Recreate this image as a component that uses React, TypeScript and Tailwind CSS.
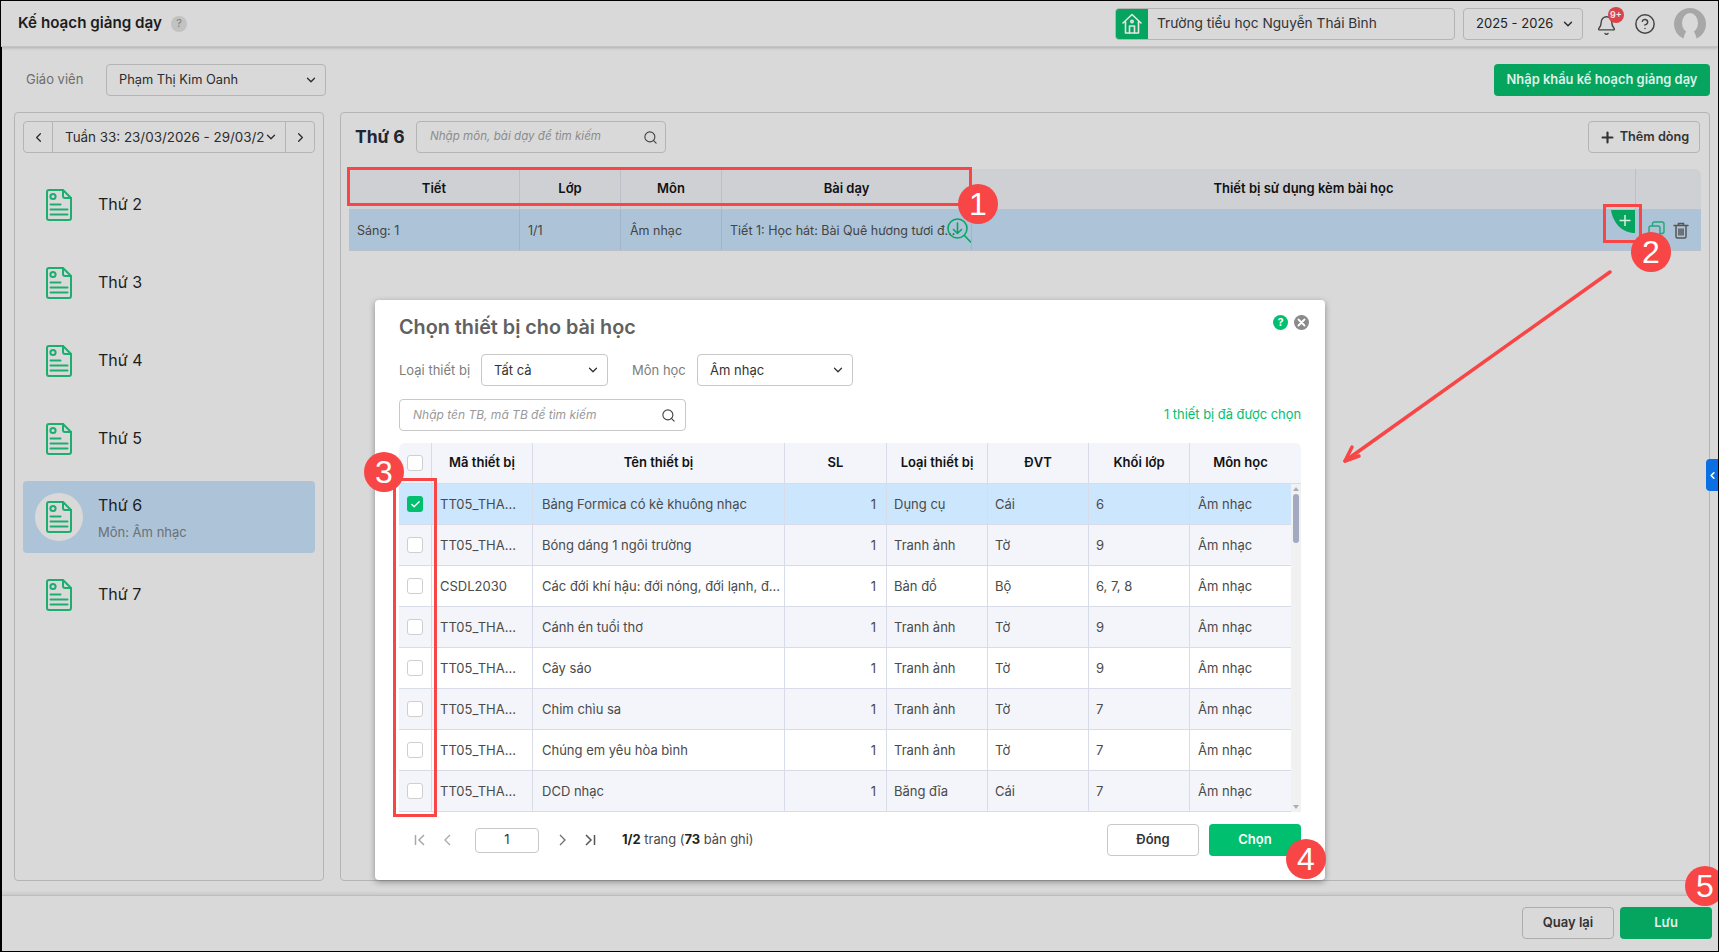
import React from "react";
import { ChevronDown, ChevronLeft, ChevronRight, Search, Plus, Bell, CircleHelp, Check } from "lucide-react";

const Doc = () => (
  <svg width="26" height="32" viewBox="0 0 26 32" fill="none" stroke="#1dae6f" strokeWidth="2" strokeLinejoin="round" strokeLinecap="round">
    <path d="M3 1h14l8 8v20a2 2 0 0 1-2 2H3a2 2 0 0 1-2-2V3a2 2 0 0 1 2-2z" />
    <path d="M17 1v6a2 2 0 0 0 2 2h6" />
    <circle cx="7" cy="7.5" r="2.6" />
    <path d="M4.5 15.5h10M4.5 20.500h17M4.500 25.500h17" />
  </svg>
);

const days = ["Thứ 2", "Thứ 3", "Thứ 4", "Thứ 5", "Thứ 6", "Thứ 7"];

const rows = [
  ["TT05_THA...", "Bảng Formica có kè khuông nhạc", "Dụng cụ", "Cái", "6"],
  ["TT05_THA...", "Bóng dáng 1 ngôi trường", "Tranh ảnh", "Tờ", "9"],
  ["CSDL2030", "Các đới khí hậu: đới nóng, đới lạnh, đ...", "Bản đồ", "Bộ", "6, 7, 8"],
  ["TT05_THA...", "Cánh én tuổi thơ", "Tranh ảnh", "Tờ", "9"],
  ["TT05_THA...", "Cây sáo", "Tranh ảnh", "Tờ", "9"],
  ["TT05_THA...", "Chim chìu sa", "Tranh ảnh", "Tờ", "7"],
  ["TT05_THA...", "Chúng em yêu hòa bình", "Tranh ảnh", "Tờ", "7"],
  ["TT05_THA...", "DCD nhạc", "Băng đĩa", "Cái", "7"],
];

const Badge = ({ n, className }: { n: string; className: string }) => (
  <div className={"absolute w-[40px] h-[40px] rounded-full bg-[#f84545] text-white text-[32px] leading-[40px] text-center font-['Liberation_Sans',sans-serif] " + className}>{n}</div>
);

const Frame = ({ className }: { className: string }) => (
  <div className={"absolute border-[3px] border-[#f84545] " + className} />
);

export default function App() {
  return (
    <div className="relative w-[1719px] h-[952px] overflow-hidden border border-black bg-[#d9d9d9] flex flex-col font-['Inter',sans-serif] text-[13px] text-[#2b2b2b]">
      {/* Header */}
      <header className="h-[46px] shrink-0 flex items-center pl-[17px] pr-[11px] border-b border-[#c4c4c4] shadow-[0_1px_3px_rgba(0,0,0,0.2)] relative">
        <span className="text-[15.2px] font-semibold text-[#1d1d1d]">Kế hoạch giảng dạy</span>
        <span className="ml-[9px] w-[16px] h-[16px] rounded-full bg-[#c2c2c2] text-[#808080] text-[11px] flex items-center justify-center">?</span>
        <div className="ml-auto flex items-center h-[32px] w-[340px] border border-[#b5b5b5] rounded-[4px] overflow-hidden">
          <div className="w-[32px] h-full bg-[#05a55f] flex items-center justify-center">
            <svg width="20" height="22" viewBox="0 0 20 22" fill="none" stroke="#e6e6e6" strokeWidth="1.6" strokeLinejoin="round" strokeLinecap="round">
              <path d="M1 10l9-8.500 9 8.500M3.500 8.500V20h13V8.500" />
              <path d="M7.500 20v-7h5v7" />
              <circle cx="10" cy="8.500" r="1.200" />
            </svg>
          </div>
          <span className="ml-[9px] text-[13.7px] text-[#333]">Trường tiểu học Nguyễn Thái Bình</span>
        </div>
        <div className="ml-[8px] h-[32px] w-[120px] border border-[#b5b5b5] rounded-[4px] flex items-center justify-between pl-[12px] pr-[7px] text-[13px] text-[#222]">
          2025 - 2026 <ChevronDown size={14} strokeWidth={2.2} />
        </div>
        <div className="ml-[10px] w-[32px] h-[32px] relative flex items-center justify-center">
          <Bell size={21} strokeWidth={1.6} className="text-[#444] mt-[3px] mr-[6px]" />
          <span className="absolute top-[-1px] right-[1px] w-[16px] h-[16px] rounded-full bg-[#d9434a] text-[#eee] text-[9px] font-semibold flex items-center justify-center">9+</span>
        </div>
        <CircleHelp size={22} strokeWidth={1.6} className="ml-[9px] text-[#444]" />
        <svg className="ml-[17px]" width="34" height="32" viewBox="0 0 34 32">
          <circle cx="17" cy="16" r="16" fill="#a7a7a7" />
          <ellipse cx="17" cy="15" rx="8" ry="10" fill="#d9d9d9" />
          <path d="M10 32 Q13 20 17 20 Q21 20 24 32z" fill="#d9d9d9" />
        </svg>
      </header>

      <div className="flex-1 min-h-0 flex flex-col border-l border-black">
        {/* Teacher row */}
        <div className="mt-[17px] h-[32px] shrink-0 flex items-center pl-[24px] pr-[8px]">
          <span className="w-[80px] text-[#6e6e6e]">Giáo viên</span>
          <div className="w-[220px] h-full border border-[#b5b5b5] rounded-[4px] flex items-center justify-between pl-[12px] pr-[7px] text-[12.8px] text-[#2b2b2b]">
            Phạm Thị Kim Oanh <ChevronDown size={14} strokeWidth={2.2} />
          </div>
          <button className="ml-auto w-[216px] h-full rounded-[4px] bg-[#05a55f] text-[#dff1e8] font-semibold text-[12.9px]">Nhập khẩu kế hoạch giảng dạy</button>
        </div>

        {/* Panels */}
        <div className="mt-[16px] mb-[14px] flex-1 min-h-0 flex gap-[16px] pl-[12px] pr-[8px]">
          <aside className="w-[310px] shrink-0 border border-[#b5b5b5] rounded-[4px] pt-[8px] px-[8px] flex flex-col">
            <div className="h-[32px] shrink-0 flex border border-[#b5b5b5] rounded-[4px]">
              <div className="w-[29px] flex items-center justify-center border-r border-[#b5b5b5]"><ChevronLeft size={15} strokeWidth={2} /></div>
              <div className="flex-1 flex items-center justify-between pl-[12px] pr-[7px] overflow-hidden whitespace-nowrap">
                <span className="w-[199px] overflow-hidden text-[13.4px] text-[#2b2b2b]">Tuần 33: 23/03/2026 - 29/03/2026</span>
                <ChevronDown size={14} strokeWidth={2.2} />
              </div>
              <div className="w-[29px] flex items-center justify-center border-l border-[#b5b5b5]"><ChevronRight size={15} strokeWidth={2} /></div>
            </div>
            <div className="mt-[16px] flex flex-col gap-[6px]">
              {days.map((d) => {
                const active = d === "Thứ 6";
                return (
                  <div key={d} className={"h-[72px] rounded-[4px] flex items-center " + (active ? "bg-[#adc3d7]" : "")}>
                    <div className={"ml-[12px] w-[48px] h-[48px] rounded-full flex items-center justify-center " + (active ? "bg-[#d9d9d9]" : "")}><Doc /></div>
                    <div className={"ml-[15px] flex flex-col " + (active ? "" : "mb-[2px]")}>
                      <span className="text-[16px] leading-[20px] text-[#1d1d1d]">{d}</span>
                      {active && <span className="mt-[9px] text-[13px] leading-[16px] text-[#6c7075]">Môn: Âm nhạc</span>}
                    </div>
                  </div>
                );
              })}
            </div>
          </aside>

          <main className="flex-1 min-w-0 border border-[#b5b5b5] rounded-[4px] pt-[8px] pl-[8px] pr-[9px] flex flex-col">
            <div className="h-[32px] shrink-0 flex items-center">
              <span className="ml-[6px] w-[49px] whitespace-nowrap text-[17.5px] font-bold text-[#1f2733]">Thứ 6</span>
              <div className="ml-[12px] w-[250px] h-full border border-[#b5b5b5] rounded-[4px] flex items-center justify-between pl-[13px] pr-[7px]">
                <span className="italic text-[11.6px] text-[#8c8c8c]">Nhập môn, bài dạy để tìm kiếm</span>
                <Search size={15} strokeWidth={1.8} className="text-[#444]" />
              </div>
              <button className="ml-auto w-[112px] h-full border border-[#b5b5b5] rounded-[4px] flex items-center justify-center gap-[4px] font-semibold text-[12.7px] text-[#333]">
                <Plus size={17} strokeWidth={3} /> Thêm dòng
              </button>
            </div>

            <div className="mt-[16px] w-[1352px]">
              <div className="grid grid-cols-[171px_101px_101px_250px_664px_65px] h-[41px] rounded-t-[6px] bg-[#ced0d4] font-semibold text-[#111] border-b border-[#bcc0cc]">
                {["Tiết", "Lớp", "Môn", "Bài dạy", "Thiết bị sử dụng kèm bài học", ""].map((h, i) => (
                  <div key={i} className={"flex items-center justify-center " + (i < 5 ? "border-r border-[#bcbfc8]" : "")}>{h}</div>
                ))}
              </div>
              <div className="grid grid-cols-[171px_101px_101px_250px_729px] h-[41px] bg-[#adc3d7] text-[12.5px] text-[#444] border-b border-[#bcc0cc]">
                <div className="flex items-center pt-[2px] pl-[8px] border-r border-[#a2b5c8]">Sáng: 1</div>
                <div className="flex items-center pt-[2px] pl-[8px] border-r border-[#a2b5c8]">1/1</div>
                <div className="flex items-center pt-[2px] pl-[9px] border-r border-[#a2b5c8]">Âm nhạc</div>
                <div className="relative flex items-center pt-[2px] pl-[8px] border-r border-[#a2b5c8]">
                  <span className="w-[226px] truncate">Tiết 1: Học hát: Bài Quê hương tươi đẹp</span>
                  <svg className="absolute left-[225px] top-[8px]" width="24" height="25" viewBox="0 0 24 25" fill="none" stroke="#07a763" strokeWidth="1.600" strokeLinecap="round" strokeLinejoin="round">
                    <circle cx="10.500" cy="10.500" r="9.500" />
                    <path d="M17.500 17.500l6 6.500M10.500 5v10.500M6.500 11.500l4 4 4-4" />
                  </svg>
                </div>
                <div className="flex justify-end pr-[12px]">
                  <svg width="24" height="23" viewBox="0 0 24 23">
                    <path d="M0 0H24V23C11 23 2 13 0 0Z" fill="#05a55f" />
                    <path d="M14 5v11M8.500 10.500h11" stroke="#d9efe4" strokeWidth="1.500" />
                  </svg>
                  <svg className="ml-[13px] mt-[11px]" width="17" height="17" viewBox="0 0 17 17" fill="none" stroke="#20a878" strokeWidth="1.400">
                    <rect x="4.500" y="1" width="11.500" height="11.500" rx="2" />
                    <rect x="1" y="5" width="11" height="11" rx="2" fill="#adc3d7" />
                  </svg>
                  <svg className="ml-[8px] mt-[12px]" width="16" height="17" viewBox="0 0 16 17" fill="none" stroke="#565656" strokeWidth="1.500" strokeLinecap="round">
                    <path d="M1 3.500h14M5.500 3V1.500h5V3M3 4v10.500a1.500 1.500 0 0 0 1.500 1.500h7a1.500 1.500 0 0 0 1.500-1.500V4M6 7v6M8 7v6M10 7v6" />
                  </svg>
                </div>
              </div>
            </div>
          </main>
        </div>

        {/* Footer */}
        <footer className="h-[56px] shrink-0 border-t border-[#bdbdbd] shadow-[0_-2px_3px_rgba(0,0,0,0.08)] flex items-start justify-end gap-[6px] pt-[11px] pr-[6px] font-semibold">
          <button className="w-[92px] h-[32px] border border-[#adadad] rounded-[4px] text-[#333]">Quay lại</button>
          <button className="w-[92px] h-[32px] rounded-[4px] bg-[#05a55f] text-[#dff1e8]">Lưu</button>
        </footer>
      </div>

      {/* Dialog */}
      <div className="absolute left-[374px] top-[299px] w-[950px] h-[580px] bg-white rounded-[4px] shadow-[0_2px_6px_rgba(0,0,0,0.35)] px-[24px] pt-[14px] flex flex-col">
        <div className="flex items-start justify-between">
          <h2 className="text-[19.8px] leading-[24px] mt-[1px] mb-[-1px] font-semibold text-[#616161]">Chọn thiết bị cho bài học</h2>
          <div className="flex items-center gap-[6px] mr-[-8px] mt-[1px]">
            <span className="w-[15px] h-[15px] rounded-full bg-[#00c070] text-white text-[11px] font-bold flex items-center justify-center">?</span>
            <span className="w-[15px] h-[15px] rounded-full bg-[#8a8a8a] flex items-center justify-center">
              <svg width="9" height="9" viewBox="0 0 9 9" fill="none" stroke="#ffffff" strokeWidth="1.800" strokeLinecap="round"><path d="M1.500 1.500l6 6M7.500 1.500l-6 6" /></svg>
            </span>
          </div>
        </div>
        <div className="mt-[16px] h-[32px] flex items-center text-[#7d7d7d]">
          <span className="w-[82px] pt-[2px]">Loại thiết bị</span>
          <div className="w-[127px] h-full border border-[#c8c8c8] rounded-[4px] flex items-center justify-between pl-[12px] pr-[7px] text-[#333]"><span className="pt-[2px]">Tất cả</span> <ChevronDown size={14} strokeWidth={2.2} /></div>
          <span className="ml-[24px] w-[65px] pt-[2px]">Môn học</span>
          <div className="w-[156px] h-full border border-[#c8c8c8] rounded-[4px] flex items-center justify-between pl-[12px] pr-[7px] text-[#333]"><span className="pt-[2px]">Âm nhạc</span> <ChevronDown size={14} strokeWidth={2.2} /></div>
        </div>
        <div className="mt-[13px] h-[32px] flex items-center justify-between">
          <div className="w-[287px] h-full border border-[#c8c8c8] rounded-[4px] flex items-center justify-between pl-[13px] pr-[9px]">
            <span className="italic text-[12px] text-[#9a9a9a]">Nhập tên TB, mã TB để tìm kiếm</span>
            <Search size={15} strokeWidth={1.8} className="text-[#444]" />
          </div>
          <span className="text-[12.9px] text-[#00c070]">1 thiết bị đã được chọn</span>
        </div>

        <div className="mt-[12px] w-[902px] relative">
          <div className="grid grid-cols-[33px_101px_252px_102px_101px_101px_101px_111px] h-[41px] bg-[#f3f5fa] rounded-t-[6px] font-semibold text-[#111] border-b border-[#d8dbe8]">
            <div className="flex items-center justify-center border-r border-[#d8dbe8]">
              <span className="w-[16px] h-[16px] bg-white border border-[#cfcfcf] rounded-[3px]" />
            </div>
            {["Mã thiết bị", "Tên thiết bị", "SL", "Loại thiết bị", "ĐVT", "Khối lớp", "Môn học"].map((h, i) => (
              <div key={h} className={"flex items-center justify-center " + (i < 6 ? "border-r border-[#d8dbe8] " : "pr-[10px]")}>{h}</div>
            ))}
          </div>
          <div className="flex">
            <div className="w-[892px]">
              {rows.map((r, i) => (
                <div key={i} className={"grid grid-cols-[33px_101px_252px_102px_101px_101px_101px_101px] h-[41px] border-b border-[#d8dbe8] text-[#4a4a4a] " + (i === 0 ? "bg-[#cce6fd]" : i % 2 === 1 ? "bg-[#f3f5fa]" : "bg-white")}>
                  <div className="flex items-center justify-center border-r border-[#d8dbe8]">
                    {i === 0 ? (
                      <span className="w-[16px] h-[16px] bg-[#00c070] rounded-[3px] flex items-center justify-center"><Check size={11} strokeWidth={3} className="text-white" /></span>
                    ) : (
                      <span className="w-[16px] h-[16px] bg-white border border-[#cfcfcf] rounded-[3px]" />
                    )}
                  </div>
                  <div className="flex items-center pt-[2px] pl-[8px] border-r border-[#d8dbe8]">{r[0]}</div>
                  <div className="flex items-center pt-[2px] pl-[9px] border-r border-[#d8dbe8]">{r[1]}</div>
                  <div className="flex items-center justify-end pt-[2px] pr-[10px] border-r border-[#d8dbe8]">1</div>
                  <div className="flex items-center pt-[2px] pl-[7px] border-r border-[#d8dbe8]">{r[2]}</div>
                  <div className="flex items-center pt-[2px] pl-[7px] border-r border-[#d8dbe8]">{r[3]}</div>
                  <div className="flex items-center pt-[2px] pl-[7px] border-r border-[#d8dbe8]">{r[4]}</div>
                  <div className="flex items-center pt-[2px] pl-[8px]">Âm nhạc</div>
                </div>
              ))}
            </div>
            <div className="w-[10px] bg-[#f1f1f1] flex flex-col items-center justify-between py-[3px]">
              <div className="flex flex-col items-center">
                <span className="w-0 h-0 border-x-[3px] border-x-transparent border-b-[4px] border-b-[#a8adbd]" />
                <span className="mt-[3px] w-[6px] h-[49px] rounded-[3px] bg-[#a2a9c0]" />
              </div>
              <span className="w-0 h-0 border-x-[3px] border-x-transparent border-t-[4px] border-t-[#a8adbd]" />
            </div>
          </div>
        </div>

        <div className="mt-[12px] h-[32px] flex items-center">
          <svg className="ml-[15px]" width="12" height="12" viewBox="0 0 12 12" fill="none" stroke="#a8a8a8" strokeWidth="1.500"><path d="M1.500 1v10M10 1L5 6l5 5" /></svg>
          <svg className="ml-[16px]" width="10" height="12" viewBox="0 0 10 12" fill="none" stroke="#a8a8a8" strokeWidth="1.300"><path d="M8 1L3 6l5 5" /></svg>
          <div className="ml-[23px] w-[64px] h-[25px] border border-[#c8c8c8] rounded-[4px] flex items-center justify-center text-[#333]">1</div>
          <svg className="ml-[19px]" width="10" height="12" viewBox="0 0 10 12" fill="none" stroke="#6e6e6e" strokeWidth="1.300"><path d="M2 1l5 5-5 5" /></svg>
          <svg className="ml-[16px]" width="12" height="12" viewBox="0 0 12 12" fill="none" stroke="#555" strokeWidth="1.500"><path d="M10.500 1v10M2 1l5 5-5 5" /></svg>
          <span className="ml-[26px] text-[12.9px] text-[#4a4a4a]"><b className="text-[#222]">1/2</b> trang (<b className="text-[#222]">73</b> bản ghi)</span>
          <button className="ml-auto w-[92px] h-[32px] border border-[#c8c8c8] rounded-[4px] font-semibold text-[#333]">Đóng</button>
          <button className="ml-[10px] w-[92px] h-[32px] rounded-[4px] bg-[#00c070] text-white font-semibold">Chọn</button>
        </div>
      </div>

      {/* Right-edge tab */}
      <div className="absolute right-0 top-[458px] w-[12px] h-[32px] bg-[#0a6fe3] rounded-l-[4px] flex items-center justify-center">
        <ChevronLeft size={11} strokeWidth={3.500} className="text-white" />
      </div>

      {/* Annotations */}
      <Frame className="left-[346px] top-[166px] w-[625px] h-[39px]" />
      <Badge n="1" className="left-[957px] top-[183px]" />
      <Frame className="left-[1602px] top-[203px] w-[39px] h-[39px]" />
      <Badge n="2" className="left-[1630px] top-[231px]" />
      <svg className="absolute left-[1328px] top-[258px] pointer-events-none" width="300" height="220" viewBox="0 0 300 220" fill="none" stroke="#f84545" strokeWidth="3.500" strokeLinecap="round" strokeLinejoin="round">
        <path d="M281 13L16 202" />
        <path d="M30 197L16 202L23 188" />
      </svg>
      <Frame className="left-[392px] top-[477px] w-[44px] h-[339px]" />
      <Badge n="3" className="left-[363px] top-[451px]" />
      <Badge n="4" className="left-[1285px] top-[838px]" />
      <Badge n="5" className="left-[1684px] top-[865px]" />
    </div>
  );
}
